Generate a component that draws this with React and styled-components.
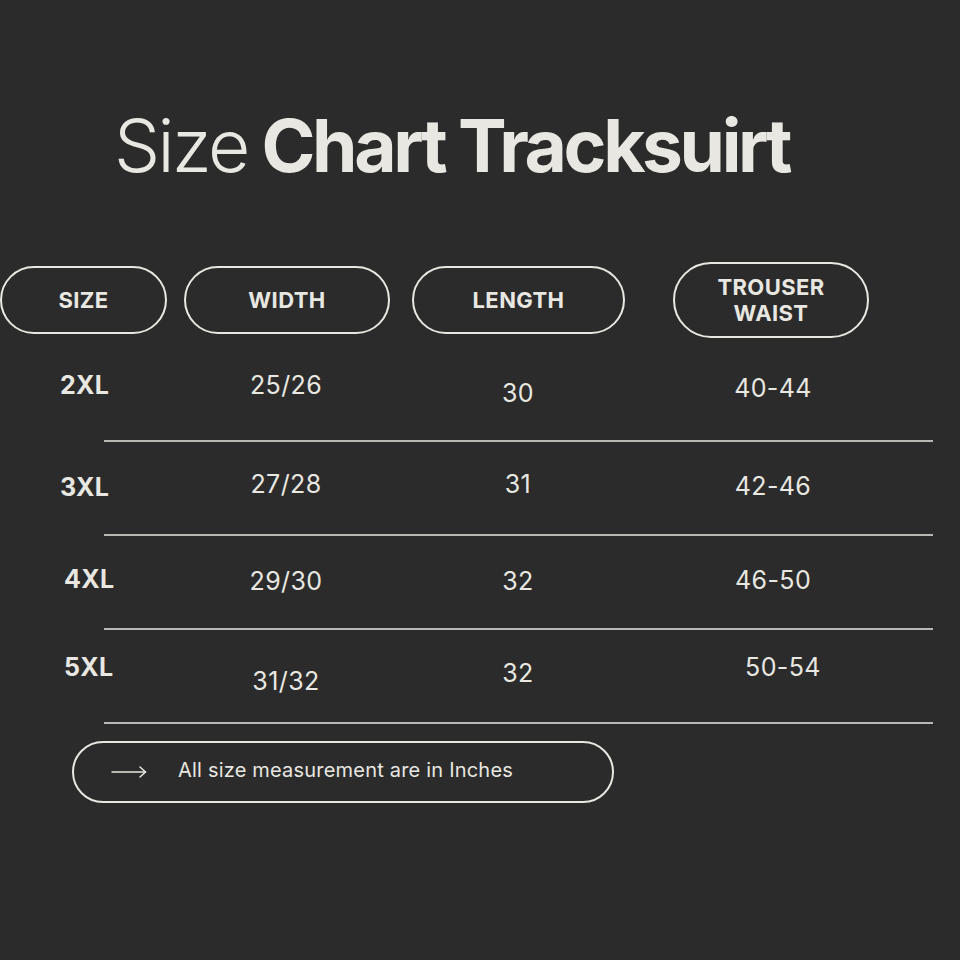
import React from "react";
import styled, { createGlobalStyle } from "styled-components";

const Global = createGlobalStyle`
  html, body { margin: 0; padding: 0; background: #2b2b2b; }
  * { box-sizing: border-box; }
`;

const INK = "#e9e7e1";

const Page = styled.div`
  width: 960px;
  height: 960px;
  overflow: hidden;
  background: #2b2b2b;
  color: ${INK};
  font-family: Inter, "Liberation Sans", sans-serif;
  display: flex;
  flex-direction: column;
`;

const Title = styled.h1`
  margin: 109px 0 0 114px;
  font-size: 73px;
  line-height: 73px;
  font-weight: 700;
  letter-spacing: -3.4px;
  white-space: nowrap;
`;

const Light = styled.span`
  font-weight: 300;
  letter-spacing: -2.6px;
`;

const HeaderRow = styled.div`
  display: flex;
  align-items: center;
  margin-top: 80px;
  height: 75px;
`;

const Pill = styled.div`
  width: ${p => p.$w}px;
  height: ${p => p.$h || 68}px;
  margin-left: ${p => p.$ml || 0}px;
  border: 2px solid ${INK};
  border-radius: 999px;
  display: flex;
  align-items: center;
  justify-content: center;
  text-align: center;
  font-size: 22px;
  line-height: 26px;
  font-weight: 700;
  letter-spacing: 0.4px;
`;

const Table = styled.div`
  margin-top: 11px;
  display: flex;
  flex-direction: column;
`;

const Row = styled.div`
  display: grid;
  grid-template-columns: 186px 200px 32px 200px 55px 200px;
  height: 92px;
`;

const SizeCell = styled.div`
  grid-column: 1;
  padding-left: ${p => p.$left}px;
  padding-top: ${p => p.$top - 15}px;
  font-size: 25px;
  line-height: 30px;
  font-weight: 700;
  letter-spacing: 0.3px;
`;

const ValueCell = styled.div`
  grid-column: ${p => p.$col};
  padding-top: ${p => p.$top - 15}px;
  padding-left: ${p => p.$shift || 0}px;
  text-align: center;
  font-size: 25px;
  line-height: 30px;
  font-weight: 400;
  letter-spacing: 0.4px;
`;

const Divider = styled.div`
  height: 2px;
  margin-left: 104px;
  width: 829px;
  background: #b8b8b4;
`;

const Note = styled.div`
  margin: 17px 0 0 72px;
  width: 542px;
  height: 62px;
  border: 2px solid ${INK};
  border-radius: 999px;
  display: flex;
  align-items: center;
  padding: 0 0 5px 37px;
  gap: 31px;
  font-size: 20px;
  letter-spacing: 0.2px;
  font-weight: 400;
`;

const ArrowBox = styled.span`
  display: flex;
  padding-top: 5px;
`;

const Arrow = () => (
  <ArrowBox>
    <svg width="36" height="14" viewBox="0 0 36 14" fill="none" stroke={INK} strokeWidth="1.5" strokeLinecap="round" strokeLinejoin="round">
      <path d="M1 7H34.5" />
      <path d="M29 2L34.5 7L29 12" />
    </svg>
  </ArrowBox>
);

const rows = [
  { size: "2XL", left: 60, st: 37, vals: [["25/26", 36.5], ["30", 45], ["40-44", 40]] },
  { size: "3XL", left: 60, st: 45, vals: [["27/28", 42], ["31", 42], ["42-46", 44]] },
  { size: "4XL", left: 64, st: 43, vals: [["29/30", 45], ["32", 45], ["46-50", 44]] },
  { size: "5XL", left: 64, st: 37, vals: [["31/32", 51], ["32", 43], ["50-54", 37, 20]] },
];

const cols = [2, 4, 6];

export default function App() {
  return (
    <Page>
      <Global />
      <Title>
        <Light>Size</Light> Chart Tracksuirt
      </Title>
      <HeaderRow>
        <Pill $w={167}>SIZE</Pill>
        <Pill $w={206} $ml={17}>WIDTH</Pill>
        <Pill $w={213} $ml={22}>LENGTH</Pill>
        <Pill $w={196} $h={76} $ml={48}>TROUSER<br />WAIST</Pill>
      </HeaderRow>
      <Table>
        {rows.map(r => (
          <React.Fragment key={r.size}>
            <Row>
              <SizeCell $left={r.left} $top={r.st}>{r.size}</SizeCell>
              {r.vals.map(([v, t, shift], i) => (
                <ValueCell key={i} $col={cols[i]} $top={t} $shift={shift}>{v}</ValueCell>
              ))}
            </Row>
            <Divider />
          </React.Fragment>
        ))}
      </Table>
      <Note>
        <Arrow />
        <span>All size measurement are in Inches</span>
      </Note>
    </Page>
  );
}
